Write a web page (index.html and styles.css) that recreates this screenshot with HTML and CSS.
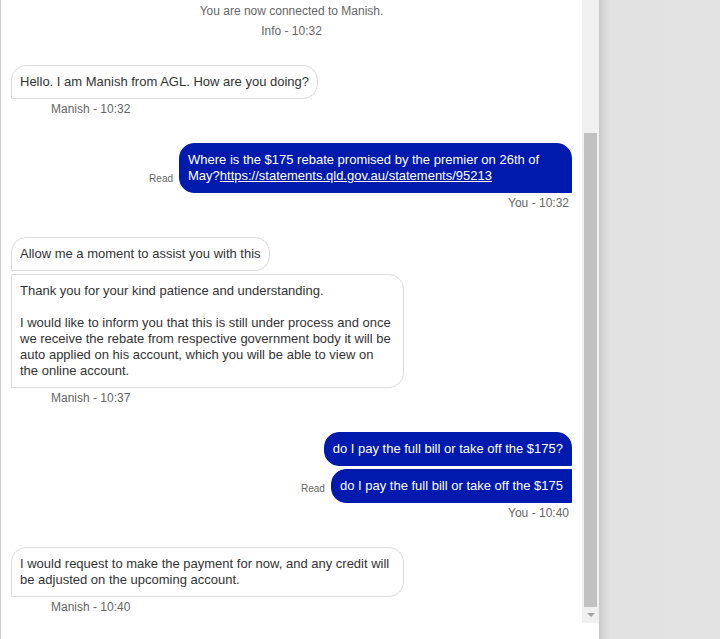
FILE: index.html
```html
<!DOCTYPE html>
<html>
<head>
<meta charset="utf-8">
<link rel="stylesheet" href="styles.css">
</head>
<body>
<div class="page">
  <div class="chat">
    <div class="messages">
      <div class="system">You are now connected to Manish.</div>
      <div class="system system-meta">Info - 10:32</div>

      <div class="group in">
        <div class="bubble first">Hello. I am Manish from AGL. How are you doing?</div>
        <div class="meta">Manish - 10:32</div>
      </div>

      <div class="group out">
        <div class="row">
          <span class="read">Read</span>
          <div class="bubble first">Where is the $175 rebate promised by the premier on 26th of May?<a href="#">https://statements.qld.gov.au/statements/95213</a></div>
        </div>
        <div class="meta">You - 10:32</div>
      </div>

      <div class="group in">
        <div class="bubble first">Allow me a moment to assist you with this</div>
        <div class="bubble next">Thank you for your kind patience and understanding.<br><br>I would like to inform you that this is still under process and once we receive the rebate from respective government body it will be auto applied on his account, which you will be able to view on the online account.</div>
        <div class="meta">Manish - 10:37</div>
      </div>

      <div class="group out">
        <div class="row">
          <div class="bubble first">do I pay the full bill or take off the $175?</div>
        </div>
        <div class="row">
          <span class="read">Read</span>
          <div class="bubble next">do I pay the full bill or take off the $175</div>
        </div>
        <div class="meta">You - 10:40</div>
      </div>

      <div class="group in">
        <div class="bubble first">I would request to make the payment for now, and any credit will be adjusted on the upcoming account.</div>
        <div class="meta">Manish - 10:40</div>
      </div>
    </div>
    <div class="scrollbar">
      <div class="thumb"></div>
      <div class="arrow"><span class="tri"></span></div>
    </div>
  </div>
  <div class="backdrop"></div>
</div>
</body>
</html>
```

FILE: styles.css
```css
html, body {
  margin: 0;
  padding: 0;
  background: #ffffff;
}

body {
  font-family: "Liberation Sans", Arial, sans-serif;
  color: #333333;
}

.page {
  display: flex;
  width: 720px;
  height: 639px;
  overflow: hidden;
}

.chat {
  display: flex;
  width: 598px;
  height: 639px;
  border-left: 1px solid #cfcfcf;
  background: #ffffff;
  flex: none;
}

.messages {
  width: 581px;
  box-sizing: border-box;
  padding: 4px 10px 0 10px;
  display: flex;
  flex-direction: column;
}

.system {
  font-size: 12px;
  line-height: 14px;
  color: #666666;
  text-align: center;
}

.system-meta {
  margin-top: 6px;
}

.group {
  display: flex;
  flex-direction: column;
  margin-top: 27px;
}

.group.in {
  align-items: flex-start;
}

.group.out {
  align-items: flex-end;
}

.bubble {
  box-sizing: border-box;
  max-width: 393px;
  padding: 8px;
  font-size: 13px;
  line-height: 16px;
  border: 1px solid #dcdcdc;
  background: #ffffff;
  color: #333333;
}

.group.in .bubble.first {
  border-radius: 15px 15px 15px 0;
}

.group.in .bubble.next {
  margin-top: 3px;
  border-radius: 0 15px 15px 0;
}

.group.out .bubble {
  background: #001aad;
  border-color: #001aad;
  color: #ffffff;
}

.group.out .bubble.first {
  border-radius: 15px 15px 0 15px;
}

.group.out .bubble.next {
  border-radius: 15px 0 0 15px;
}

.group.out .row + .row {
  margin-top: 3px;
}

.bubble a {
  color: #ffffff;
  text-decoration: underline;
}

.row {
  display: flex;
  align-items: flex-end;
  justify-content: flex-end;
  max-width: 100%;
}

.read {
  font-size: 10px;
  line-height: 12px;
  color: #666666;
  margin-right: 6px;
  margin-bottom: 8px;
}

.meta {
  font-size: 12px;
  line-height: 14px;
  color: #666666;
  margin-top: 3px;
}

.group.in .meta {
  padding-left: 40px;
}

.group.out .meta {
  padding-right: 3px;
}

.scrollbar {
  width: 17px;
  height: 623px;
  background: #f0f0f0;
  box-sizing: border-box;
  padding-top: 133px;
  display: flex;
  flex-direction: column;
  flex: none;
}

.thumb {
  width: 13px;
  height: 474px;
  margin-left: 2px;
  background: #c1c1c1;
}

.arrow {
  height: 16px;
  display: flex;
  align-items: center;
  justify-content: center;
}

.tri {
  width: 0;
  height: 0;
  border-left: 4px solid transparent;
  border-right: 4px solid transparent;
  border-top: 4px solid #a3a3a3;
}

.backdrop {
  flex: 1;
  height: 639px;
  background: linear-gradient(to right, #c9c9c9 0, #d8d8d8 5px, #e2e2e2 12px, #e3e3e3 100%);
}
```
